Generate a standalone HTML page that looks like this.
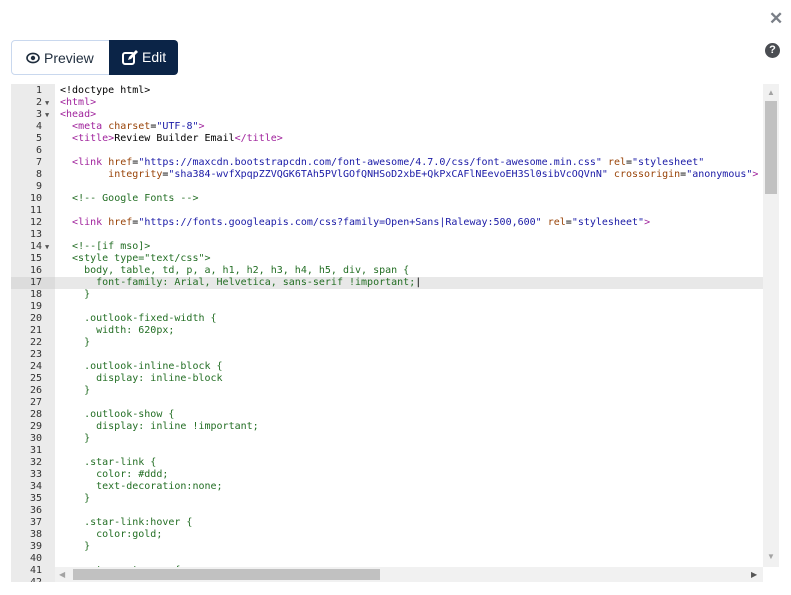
<!DOCTYPE html>
<html><head><meta charset="utf-8"><style>
body{margin:0;width:791px;height:595px;background:#fff;position:relative;overflow:hidden;font-family:"Liberation Sans",sans-serif}
.x{position:absolute;left:769px;top:9px;color:#7a7f87;font-size:17px;font-weight:bold}
.q{position:absolute;left:765px;top:43px;width:15px;height:15px;border-radius:50%;background:#4a4d52;color:#fff;font-size:11px;font-weight:bold;text-align:center;line-height:15px}
.tabs{position:absolute;left:11px;top:40px;width:166px;height:35px;border:1px solid #c9d8ee;border-radius:4px;box-sizing:border-box}
.pv{position:absolute;left:14px;top:9px;font-size:14px;color:#1f2d3d}
.ed{position:absolute;left:97px;top:-1px;width:69px;height:35px;background:#0b2447;border-radius:0 4px 4px 0;color:#fff;font-size:14px}
.ed span{position:absolute;left:33px;top:9px}
.editor{position:absolute;left:11px;top:84px;width:768px;height:498px;background:#fff;overflow:hidden}
.gut{position:absolute;left:0;top:0;width:44px;height:498px;background:#ebebeb}
.code{position:absolute;left:0;top:1px;width:752px;font-family:"DejaVu Sans Mono","Liberation Mono",monospace;font-size:10px}
.l{height:12px;line-height:12px;position:relative;white-space:pre}
.l .n{position:absolute;left:0;width:31px;text-align:right;color:#333}
.l .f{position:absolute;left:34px;color:#555;font-size:7px}
.l .c{position:absolute;left:49px;color:#000}
.hl{background:#e8e8e8}
.hl .gb{position:absolute;left:0;top:0;width:44px;height:12px;background:#dcdcdc}
.t{color:#a0239c}.a{color:#994409}.s{color:#1a1aa6}.l .g,.g{color:#236e24}
.vs{position:absolute;left:752px;top:0;width:16px;height:483px;background:#f1f1f1}
.vt{position:absolute;left:2px;top:17px;width:12px;height:93px;background:#c1c1c1}
.hs{position:absolute;left:44px;top:483px;width:708px;height:15px;background:#f1f1f1}
.ht{position:absolute;left:18px;top:2px;width:307px;height:11px;background:#c1c1c1}
.ar{position:absolute;color:#a3a3a3;font-size:8px}
</style></head><body>
<div class="x">✕</div>
<div class="q">?</div>
<div class="tabs"><div class="pv"><svg width="14" height="12" viewBox="0 0 14 12" style="vertical-align:-1px;margin-right:4px"><ellipse cx="7" cy="6" rx="6" ry="4.6" fill="none" stroke="#1f2d3d" stroke-width="1.6"/><circle cx="7" cy="6" r="2.2" fill="#1f2d3d"/></svg>Preview</div>
<div class="ed"><svg style="position:absolute;left:13px;top:10px" width="16" height="15" viewBox="0 0 16 15"><rect x="1" y="3" width="11" height="11" rx="2" fill="none" stroke="#fff" stroke-width="2"/><path d="M6 10 L7 7 L14 0 L16 2 L9 9 Z" fill="#fff"/></svg><span>Edit</span></div></div>
<div class="editor"><div class="gut"></div>
<div class="code">
<div class="l"><span class="n">1</span><span class="c">&lt;!doctype html&gt;</span></div>
<div class="l"><span class="n">2</span><span class="f">▼</span><span class="c"><span class="t">&lt;html&gt;</span></span></div>
<div class="l"><span class="n">3</span><span class="f">▼</span><span class="c"><span class="t">&lt;head&gt;</span></span></div>
<div class="l"><span class="n">4</span><span class="c">  <span class="t">&lt;meta</span> <span class="a">charset</span>=<span class="s">"UTF-8"</span><span class="t">&gt;</span></span></div>
<div class="l"><span class="n">5</span><span class="c">  <span class="t">&lt;title&gt;</span>Review Builder Email<span class="t">&lt;/title&gt;</span></span></div>
<div class="l"><span class="n">6</span></div>
<div class="l"><span class="n">7</span><span class="c">  <span class="t">&lt;link</span> <span class="a">href</span>=<span class="s">"https://maxcdn.bootstrapcdn.com/font-awesome/4.7.0/css/font-awesome.min.css"</span> <span class="a">rel</span>=<span class="s">"stylesheet"</span></span></div>
<div class="l"><span class="n">8</span><span class="c">        <span class="a">integrity</span>=<span class="s">"sha384-wvfXpqpZZVQGK6TAh5PVlGOfQNHSoD2xbE+QkPxCAFlNEevoEH3Sl0sibVcOQVnN"</span> <span class="a">crossorigin</span>=<span class="s">"anonymous"</span><span class="t">&gt;</span></span></div>
<div class="l"><span class="n">9</span></div>
<div class="l"><span class="n">10</span><span class="c">  <span class="g">&lt;!-- Google Fonts --&gt;</span></span></div>
<div class="l"><span class="n">11</span></div>
<div class="l"><span class="n">12</span><span class="c">  <span class="t">&lt;link</span> <span class="a">href</span>=<span class="s">"https://fonts.googleapis.com/css?family=Open+Sans|Raleway:500,600"</span> <span class="a">rel</span>=<span class="s">"stylesheet"</span><span class="t">&gt;</span></span></div>
<div class="l"><span class="n">13</span></div>
<div class="l"><span class="n">14</span><span class="f">▼</span><span class="c">  <span class="g">&lt;!--[if mso]&gt;</span></span></div>
<div class="l"><span class="n">15</span><span class="c g">  &lt;style type="text/css"&gt;</span></div>
<div class="l"><span class="n">16</span><span class="c g">    body, table, td, p, a, h1, h2, h3, h4, h5, div, span {</span></div>
<div class="l hl"><span class="gb"></span><span class="n">17</span><span class="c g">      font-family: Arial, Helvetica, sans-serif !important;<span style="color:#000">|</span></span></div>
<div class="l"><span class="n">18</span><span class="c g">    }</span></div>
<div class="l"><span class="n">19</span></div>
<div class="l"><span class="n">20</span><span class="c g">    .outlook-fixed-width {</span></div>
<div class="l"><span class="n">21</span><span class="c g">      width: 620px;</span></div>
<div class="l"><span class="n">22</span><span class="c g">    }</span></div>
<div class="l"><span class="n">23</span></div>
<div class="l"><span class="n">24</span><span class="c g">    .outlook-inline-block {</span></div>
<div class="l"><span class="n">25</span><span class="c g">      display: inline-block</span></div>
<div class="l"><span class="n">26</span><span class="c g">    }</span></div>
<div class="l"><span class="n">27</span></div>
<div class="l"><span class="n">28</span><span class="c g">    .outlook-show {</span></div>
<div class="l"><span class="n">29</span><span class="c g">      display: inline !important;</span></div>
<div class="l"><span class="n">30</span><span class="c g">    }</span></div>
<div class="l"><span class="n">31</span></div>
<div class="l"><span class="n">32</span><span class="c g">    .star-link {</span></div>
<div class="l"><span class="n">33</span><span class="c g">      color: #ddd;</span></div>
<div class="l"><span class="n">34</span><span class="c g">      text-decoration:none;</span></div>
<div class="l"><span class="n">35</span><span class="c g">    }</span></div>
<div class="l"><span class="n">36</span></div>
<div class="l"><span class="n">37</span><span class="c g">    .star-link:hover {</span></div>
<div class="l"><span class="n">38</span><span class="c g">      color:gold;</span></div>
<div class="l"><span class="n">39</span><span class="c g">    }</span></div>
<div class="l"><span class="n">40</span></div>
<div class="l"><span class="n">41</span><span class="c g">    .star-rate-mso {</span></div>
<div class="l"><span class="n">42</span></div>
</div>
<div class="vs"><div class="vt"></div><span class="ar" style="left:4px;top:4px">▲</span><span class="ar" style="left:4px;top:468px">▼</span></div>
<div class="hs"><div class="ht"></div><span class="ar" style="left:4px;top:3px">◀</span><span class="ar" style="left:696px;top:3px;color:#555">▶</span></div>
</div>
</body></html>
